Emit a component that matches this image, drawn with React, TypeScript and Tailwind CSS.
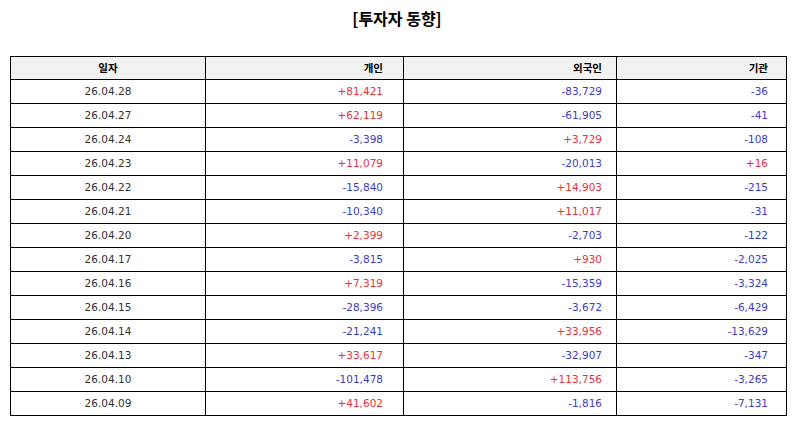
import React from "react";

type Row = [string, string, string, string];

const rows: Row[] = [
  ["26.04.28", "+81,421", "-83,729", "-36"],
  ["26.04.27", "+62,119", "-61,905", "-41"],
  ["26.04.24", "-3,398", "+3,729", "-108"],
  ["26.04.23", "+11,079", "-20,013", "+16"],
  ["26.04.22", "-15,840", "+14,903", "-215"],
  ["26.04.21", "-10,340", "+11,017", "-31"],
  ["26.04.20", "+2,399", "-2,703", "-122"],
  ["26.04.17", "-3,815", "+930", "-2,025"],
  ["26.04.16", "+7,319", "-15,359", "-3,324"],
  ["26.04.15", "-28,396", "-3,672", "-6,429"],
  ["26.04.14", "-21,241", "+33,956", "-13,629"],
  ["26.04.13", "+33,617", "-32,907", "-347"],
  ["26.04.10", "-101,478", "+113,756", "-3,265"],
  ["26.04.09", "+41,602", "-1,816", "-7,131"],
];

const color = (v: string) => (v.startsWith("+") ? "text-[#e5323b]" : "text-[#3c3cc8]");

export default function App() {
  return (
    <div className="w-[794px] h-[424px] bg-white font-['DejaVu_Sans','Noto_Sans_CJK_KR',sans-serif]">
      <div className="pt-[6px] h-[30px] text-center text-[16px] leading-[24px] font-bold text-black font-['Noto_Sans_CJK_KR',sans-serif]">
        [투자자 동향]
      </div>
      <div className="pt-[26px] pl-[10px]">
        <table className="table-fixed border-collapse w-[776px] text-[10.5px] text-[#333]">
          <colgroup>
            <col className="w-[195px]" />
            <col className="w-[198px]" />
            <col className="w-[213px]" />
            <col className="w-[170px]" />
          </colgroup>
          <thead>
            <tr className="h-[23px] bg-[#f2f2f2] text-black font-bold font-['Noto_Sans_CJK_KR',sans-serif] text-[10.5px]">
              <th className="border border-black text-center p-0 font-bold">일자</th>
              <th className="border border-black text-right pr-[20px] font-bold">개인</th>
              <th className="border border-black text-right pr-[14px] font-bold">외국인</th>
              <th className="border border-black text-right pr-[18px] font-bold">기관</th>
            </tr>
          </thead>
          <tbody>
            {rows.map((r) => (
              <tr key={r[0]} className="h-[24px]">
                <td className="border border-black text-center p-0">{r[0]}</td>
                <td className={`border border-black text-right pr-[20px] ${color(r[1])}`}>{r[1]}</td>
                <td className={`border border-black text-right pr-[14px] ${color(r[2])}`}>{r[2]}</td>
                <td className={`border border-black text-right pr-[18px] ${color(r[3])}`}>{r[3]}</td>
              </tr>
            ))}
          </tbody>
        </table>
      </div>
    </div>
  );
}
